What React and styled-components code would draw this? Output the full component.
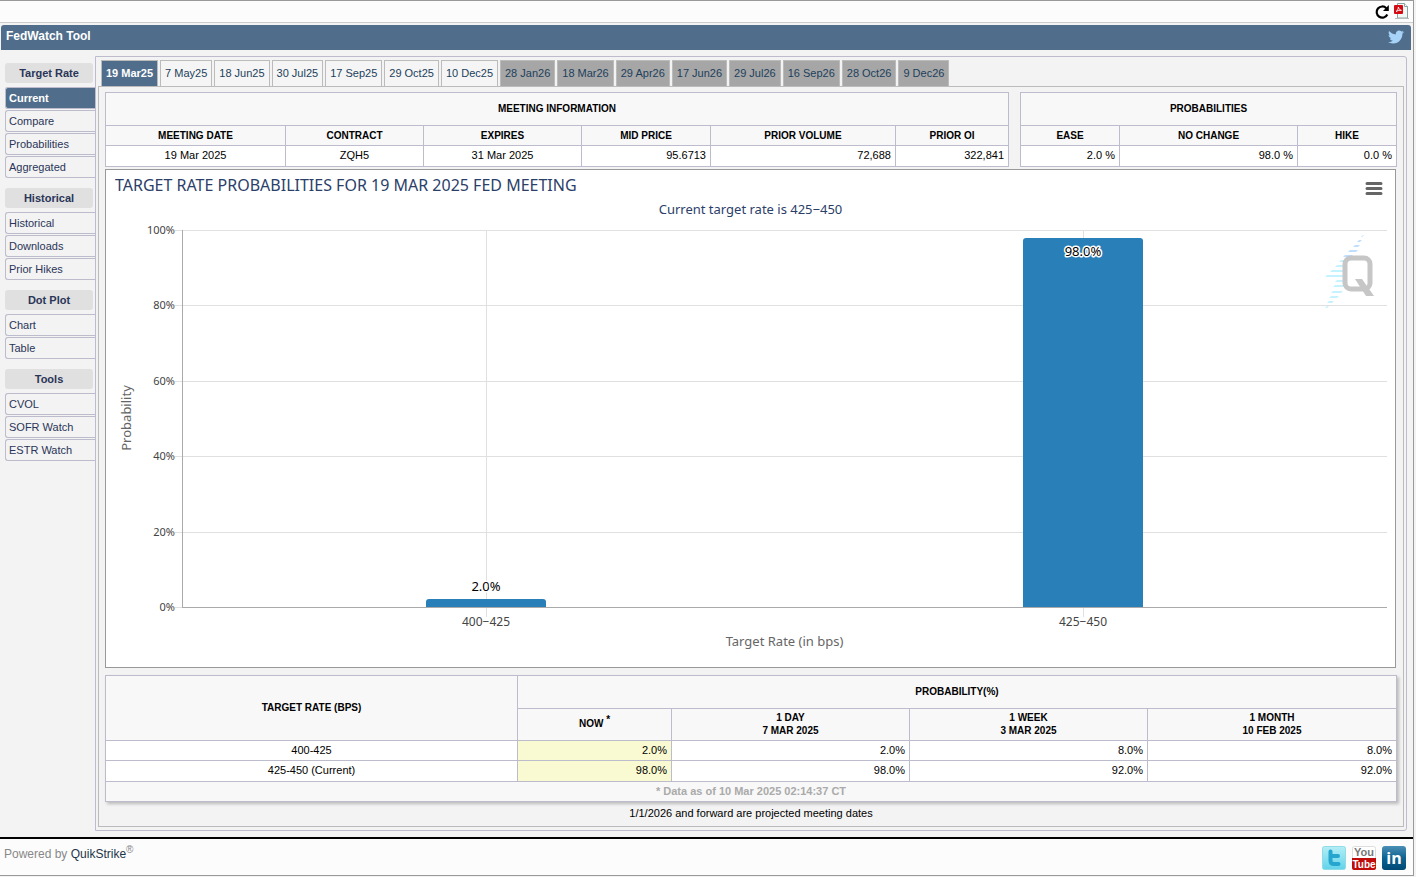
import React, { useLayoutEffect, useRef, useState } from 'react'
import styled, { createGlobalStyle, css } from 'styled-components';
import { FaTwitter } from 'react-icons/fa';

const colors = {
    page: '#f3f3f3',
    bar: '#fcfcfc',
    blue: '#506e8c',
    navy: '#2a3558',
    line: '#bcbccc',
    frame: '#999',
    head: '#f8f8f8',
    series: '#2980b9',
};

const chartFont = `'Noto Sans', 'Open Sans', sans-serif`;

const GlobalStyle = createGlobalStyle`
    * {
        box-sizing: border-box;
    }
    body {
        margin: 0;
        background: ${colors.page};
        font-family: 'Liberation Sans', Arial, sans-serif;
        font-size: 11px;
        color: #000;
    }
    a {
        text-decoration: none;
    }
`;

const Page = styled.div`
    margin-right: 2px;
    border: 1px solid ${colors.frame};
    border-left: 0;
    background: ${colors.page};
`;

const Toolbar = styled.div`
    display: flex;
    justify-content: flex-end;
    align-items: center;
    gap: 4px;
    height: 22px;
    padding-right: 4px;
    background: ${colors.bar};
    border-bottom: 1px solid #ccc;
`;

const IconButton = styled.button`
    display: flex;
    padding: 0;
    border: 0;
    background: none;
    cursor: pointer;
`;

const TitleBar = styled.header`
    display: flex;
    justify-content: space-between;
    height: 25px;
    margin: 2px 2px 0 1px;
    padding: 4px 7px 0 5px;
    border-radius: 3px 3px 0 0;
    background: ${colors.blue};
    color: #fff;
    h1 {
        margin: 0;
        font-size: 12px;
        line-height: 14px;
    }
    a {
        color: #a6d3f7;
        line-height: 0;
    }
`;

const Body = styled.div`
    display: flex;
    align-items: flex-start;
    padding: 6px 6px 6px 5px;
`;

const SideBar = styled.nav`
    flex: 0 0 90px;
    padding-top: 7px;
`;

const SideGroup = styled.div`
    display: flex;
    flex-direction: column;
    gap: 1px;
    margin-bottom: 10px;
    h2 {
        margin: 0 2px 3px 0;
        border-radius: 3px;
        background: #e0e0e0;
        color: ${colors.navy};
        font-size: 11px;
        line-height: 20px;
        text-align: center;
    }
`;

const SideLink = styled.a`
    height: 22px;
    padding-left: 3px;
    border: 1px solid ${colors.line};
    border-right: 0;
    border-radius: 3px 0 0 3px;
    color: ${colors.navy};
    line-height: 20px;
    ${({ $active }) => $active && css`
        background: ${colors.blue};
        color: #fff;
        font-weight: bold;
    `}
`;

const Panel = styled.main`
    flex: 1;
    min-width: 0;
    padding: 3px 2px;
    border: 1px solid ${colors.line};
    border-radius: 0 3px 3px 0;
`;

const Tabs = styled.div`
    display: flex;
    gap: 2px;
    padding-left: 3px;
`;

const Tab = styled.a`
    padding: 0 4px;
    border: 1px solid #bbb;
    border-bottom: 0;
    background: ${({ $projected }) => ($projected ? '#a6a6a6' : '#f5f5f5')};
    color: #1c3f5c;
    line-height: 25px;
    white-space: nowrap;
    ${({ $active }) => $active && css`
        background: ${colors.blue};
        color: #fff;
        font-weight: bold;
    `}
`;

const Content = styled.section`
    padding: 5px 6px 6px;
    border: 1px solid #bbb;
`;

const Summary = styled.div`
    display: grid;
    grid-template-columns: 904fr 377fr;
    gap: 11px;
`;

const Table = styled.table`
    width: 100%;
    table-layout: fixed;
    border-collapse: collapse;
    background: #fff;
    th, td {
        height: 20px;
        padding: 0 4px;
        border: 1px solid ${colors.line};
    }
    th {
        background: ${colors.head};
        font-size: 10px;
        line-height: 13px;
        text-transform: uppercase;
    }
    td {
        padding-bottom: 2px;
        line-height: 12px;
    }
    tbody tr:last-child td {
        height: 21px;
    }
    sup {
        font-size: 10px;
        line-height: 0;
    }
`;

const HeadCell = styled.th`
    && {
        height: ${({ $sub }) => ($sub ? 32 : 33)}px;
        padding-bottom: 2px;
    }
`;

const Cell = styled.td`
    text-align: ${({ $center }) => ($center ? 'center' : 'right')};
    background: ${({ $now }) => ($now ? '#fafad2' : '#fff')};
`;

const NoteCell = styled.td`
    background: ${colors.head};
    color: #aaa;
    font-weight: bold;
    text-align: center;
`;

const HistoryTable = styled(Table)`
    margin-top: 7px;
    box-shadow: 2px 2px 3px #bbb;
`;

const ChartBox = styled.div`
    position: relative;
    height: 499px;
    margin: 2px 1px 0 0;
    border: 1px solid ${colors.frame};
    background: #fff;
    svg {
        display: block;
    }
`;

const ChartSvg = styled.svg`
    font-family: ${chartFont};
    font-size: 11px;
    fill: #444;
    .title {
        font-size: 16px;
        fill: #2b4069;
    }
    .subtitle {
        font-size: 13px;
        fill: #2b4069;
    }
    .axis {
        font-size: 13px;
        fill: #666;
    }
    .value {
        font-size: 13px;
        fill: #000;
        stroke: #fff;
        stroke-width: 3px;
        stroke-linejoin: round;
        paint-order: stroke;
    }
    .category {
        font-size: 12px;
    }
`;

const MenuButton = styled(IconButton)`
    position: absolute;
    top: 11px;
    right: 12px;
`;

const Projected = styled.p`
    margin: 5px 0 1px;
    font-size: 11px;
    line-height: 12px;
    text-align: center;
`;

const Footer = styled.footer`
    display: flex;
    justify-content: space-between;
    height: 38px;
    padding: 7px 7px 0 4px;
    border-top: 2px solid #000;
    background: ${colors.bar};
    color: #888;
    font-size: 12px;
    line-height: 16px;
    a {
        color: #1c3348;
    }
    sup {
        font-size: 10px;
        line-height: 0;
    }
`;

const Social = styled.div`
    display: flex;
    gap: 6px;
    svg {
        display: block;
    }
`;

const menu = [
    { title: 'Target Rate', items: ['Current', 'Compare', 'Probabilities', 'Aggregated'] },
    { title: 'Historical', items: ['Historical', 'Downloads', 'Prior Hikes'] },
    { title: 'Dot Plot', items: ['Chart', 'Table'] },
    { title: 'Tools', items: ['CVOL', 'SOFR Watch', 'ESTR Watch'] },
];

const meetings = [
    '19 Mar25', '7 May25', '18 Jun25', '30 Jul25', '17 Sep25', '29 Oct25', '10 Dec25',
    '28 Jan26', '18 Mar26', '29 Apr26', '17 Jun26', '29 Jul26', '16 Sep26', '28 Oct26', '9 Dec26',
];

const info = [
    { label: 'Meeting Date', value: '19 Mar 2025', width: 180, center: true },
    { label: 'Contract', value: 'ZQH5', width: 138, center: true },
    { label: 'Expires', value: '31 Mar 2025', width: 158, center: true },
    { label: 'Mid Price', value: '95.6713', width: 129 },
    { label: 'Prior Volume', value: '72,688', width: 185 },
    { label: 'Prior OI', value: '322,841', width: 113 },
];

const odds = [
    { label: 'Ease', value: '2.0 %', width: 99 },
    { label: 'No Change', value: '98.0 %', width: 178 },
    { label: 'Hike', value: '0.0 %', width: 99 },
];

const history = [
    { rate: '400-425', values: ['2.0%', '2.0%', '8.0%', '8.0%'] },
    { rate: '425-450 (Current)', values: ['98.0%', '98.0%', '92.0%', '92.0%'] },
];

const bars = [
    { label: '400−425', value: 2 },
    { label: '425−450', value: 98 },
];

const Columns = ({ widths }) => {
    const total = widths.reduce((sum, w) => sum + w, 0);
    return (
        <colgroup>
            {widths.map((w, i) => <col key={i} style={{ width: `${(w / total) * 100}%` }} />)}
        </colgroup>
    )
}

const SummaryTable = ({ title, columns }) => (
    <Table>
        <Columns widths={columns.map(({ width }) => width)} />
        <thead>
            <tr><HeadCell colSpan={columns.length}>{title}</HeadCell></tr>
            <tr>{columns.map(({ label }) => <th key={label}>{label}</th>)}</tr>
        </thead>
        <tbody>
            <tr>{columns.map(({ label, value, center }) => <Cell key={label} $center={center}>{value}</Cell>)}</tr>
        </tbody>
    </Table>
)

// lightning bolt made of thin stripes: left, top, width
const stripes = [
    [36, 0, 1], [32, 5, 3], [28, 10, 5], [23, 15, 8], [18, 20, 8], [14, 25, 8], [10, 30, 10], [5, 35, 14],
    [0, 40, 18], [10, 45, 9], [8, 50, 10], [6, 56, 10], [4, 61, 8], [2, 66, 5], [0, 71, 2],
];

const Watermark = ({ x, y }) => (
    <g transform={`translate(${x} ${y})`}>
        {stripes.map(([left, top, width], i) => (
            <path
                key={top}
                d={`M${left + 2} ${top - 1}h${width}l-2 2h-${width}z`}
                fill={i < 5 ? '#c0dfff' : '#c4f3ff'}
            />
        ))}
        <rect x="20" y="22" width="25" height="31" rx="6" fill="#fff" stroke="#c6c6c6" strokeWidth="5" />
        <path d="M30 43h7l12 17h-8z" fill="#c6c6c6" />
    </g>
)

const Chart = () => {
    const box = useRef(null);
    const [width, setWidth] = useState(1289);

    useLayoutEffect(() => {
        const measure = () => setWidth(box.current.clientWidth);
        measure();
        window.addEventListener('resize', measure);
        return () => window.removeEventListener('resize', measure);
    }, []);

    const left = 76;
    const right = width - 8;
    const top = 60;
    const bottom = 437;
    const slot = (right - left - 12) / bars.length;
    const barWidth = Math.round(slot / 10) * 2;
    const yOf = value => Math.round(bottom - ((bottom - top) * value) / 100);
    const xOf = i => Math.round(left + 6 + slot * (i + 0.5));

    return (
        <ChartBox ref={box}>
            <ChartSvg width={width} height="497">
                <text className="title" x="9" y="21">TARGET RATE PROBABILITIES FOR 19 MAR 2025 FED MEETING</text>
                <text className="subtitle" x={width / 2} y="44" textAnchor="middle">Current target rate is 425−450</text>
                <g shapeRendering="crispEdges" fill="#e0e0e0">
                    {[20, 40, 60, 80, 100].map(v => (
                        <rect key={v} x={left - 7} y={yOf(v)} width={right - left + 7} height="1" />
                    ))}
                    <rect x={left - 7} y={bottom} width="7" height="1" />
                    {bars.map(({ label }, i) => (
                        <rect key={label} x={xOf(i)} y={top} width="1" height={bottom - top + 10} />
                    ))}
                </g>
                {[0, 20, 40, 60, 80, 100].map(v => (
                    <text key={v} x={left - 7} y={yOf(v) + 4} textAnchor="end">{v}%</text>
                ))}
                <text className="axis" textAnchor="middle" transform="translate(25 248) rotate(-90)">Probability</text>
                <Watermark x={width - 70} y={66} />
                {bars.map(({ label, value }, i) => (
                    <path
                        key={label}
                        d={`M${xOf(i) - barWidth / 2} ${bottom}V${yOf(value) + 3}q0 -3 3 -3h${barWidth - 6}q3 0 3 3V${bottom}z`}
                        fill={colors.series}
                    />
                ))}
                <g shapeRendering="crispEdges" fill="#aaa">
                    <rect x={left} y={top} width="1" height={bottom - top} />
                    <rect x={left} y={bottom} width={right - left} height="1" />
                </g>
                {bars.map(({ label, value }, i) => (
                    <g key={label} textAnchor="middle">
                        <text className="value" x={xOf(i)} y={value > 90 ? yOf(value) + 18 : yOf(value) - 8}>{value.toFixed(1)}%</text>
                        <text className="category" x={xOf(i)} y={bottom + 19}>{label}</text>
                    </g>
                ))}
                <text className="axis" x={(left + right) / 2} y="476" textAnchor="middle">Target Rate (in bps)</text>
            </ChartSvg>
            <MenuButton aria-label="Chart menu">
                <svg width="18" height="15" stroke="#666" strokeWidth="3" strokeLinecap="round">
                    <path d="M2 2.500h14M2 7.500h14M2 12.500h14" />
                </svg>
            </MenuButton>
        </ChartBox>
    )
}

const RefreshIcon = () => (
    <svg width="16" height="16" viewBox="0 0 16 16">
        <path d="M12.300 4.200A5.600 5.600 0 1 0 13.300 10.500" fill="none" stroke="#000" strokeWidth="2.200" />
        <path d="M14.800 1v6H9z" fill="#000" />
    </svg>
)

const PdfIcon = () => (
    <svg width="15" height="17" viewBox="0 0 15 17">
        <path d="M3.500 .5h7l3 3v11.500h-10z" fill="#f3f8f7" stroke="#8ba39f" />
        <path d="M10.500 .5v3h3" fill="#fff" stroke="#8ba39f" />
        <path d="M1 15.500h14" stroke="#b5bebc" />
        <rect x="0" y="2" width="9" height="9" rx="1" fill="#d40b12" />
        <path d="M2 8.700c1.200-.7 2.300-2.700 2.400-4.700.3 1.800 1.300 3 3 3.300-1.800-.2-3.800.3-5.400 1.400z" fill="none" stroke="#fff" strokeWidth=".9" />
    </svg>
)

const TwitterBadge = () => (
    <svg width="24" height="24" viewBox="0 0 24 24">
        <defs>
            <linearGradient id="tw" x1="0" y1="0" x2="0" y2="1">
                <stop offset="0" stopColor="#b4eef5" />
                <stop offset="1" stopColor="#62d3ea" />
            </linearGradient>
        </defs>
        <rect x=".5" y=".5" width="23" height="23" rx="2" fill="url(#tw)" stroke="#8fdbe8" />
        <path d="M8.500 5.500v9q0 3.500 3.500 3.500h4.500M8.500 10h7.500" fill="none" stroke="#26a5cf" strokeWidth="4" strokeLinecap="round" />
    </svg>
)

const YouTubeBadge = () => (
    <svg width="24" height="24" viewBox="0 0 24 24" fontFamily="'Liberation Sans Narrow', 'Liberation Sans', sans-serif" fontWeight="bold" textAnchor="middle">
        <rect x=".5" y=".5" width="23" height="23" rx="2" fill="#fff" stroke="#ddd" />
        <path d="M0 12h24v10q0 2-2 2h-20q-2 0-2-2z" fill="#c00b0b" />
        <text x="12" y="10" fontSize="11" fill="#777">You</text>
        <text x="12" y="22" fontSize="10" fill="#fff">Tube</text>
    </svg>
)

const LinkedInBadge = () => (
    <svg width="24" height="24" viewBox="0 0 24 24">
        <defs>
            <linearGradient id="li" x1="0" y1="0" x2="0" y2="1">
                <stop offset="0" stopColor="#4a8fb5" />
                <stop offset=".5" stopColor="#0d6291" />
                <stop offset="1" stopColor="#004a75" />
            </linearGradient>
        </defs>
        <rect width="24" height="24" rx="3" fill="url(#li)" />
        <text x="12" y="18" fontFamily="'Open Sans', sans-serif" fontWeight="bold" fontSize="16" fill="#fff" textAnchor="middle">in</text>
    </svg>
)

const App = () => (
    <>
        <GlobalStyle />
        <Page>
            <Toolbar>
                <IconButton aria-label="Refresh"><RefreshIcon /></IconButton>
                <IconButton aria-label="Export to PDF"><PdfIcon /></IconButton>
            </Toolbar>
            <TitleBar>
                <h1>FedWatch Tool</h1>
                <a href="#twitter" aria-label="Twitter"><FaTwitter size={16} /></a>
            </TitleBar>
            <Body>
                <SideBar>
                    {menu.map(({ title, items }) => (
                        <SideGroup key={title}>
                            <h2>{title}</h2>
                            {items.map(item => (
                                <SideLink key={item} href="#view" $active={item === 'Current'}>{item}</SideLink>
                            ))}
                        </SideGroup>
                    ))}
                </SideBar>
                <Panel>
                    <Tabs>
                        {meetings.map((meeting, i) => (
                            <Tab key={meeting} href="#meeting" $active={i === 0} $projected={meeting.endsWith('26')}>{meeting}</Tab>
                        ))}
                    </Tabs>
                    <Content>
                        <Summary>
                            <SummaryTable title="Meeting Information" columns={info} />
                            <SummaryTable title="Probabilities" columns={odds} />
                        </Summary>
                        <Chart />
                        <HistoryTable>
                            <Columns widths={[412, 154, 238, 238, 249]} />
                            <thead>
                                <tr>
                                    <HeadCell rowSpan="2">Target Rate (bps)</HeadCell>
                                    <HeadCell colSpan="4">Probability(%)</HeadCell>
                                </tr>
                                <tr>
                                    <HeadCell $sub>Now <sup>*</sup></HeadCell>
                                    <HeadCell $sub>1 Day<br />7 Mar 2025</HeadCell>
                                    <HeadCell $sub>1 Week<br />3 Mar 2025</HeadCell>
                                    <HeadCell $sub>1 Month<br />10 Feb 2025</HeadCell>
                                </tr>
                            </thead>
                            <tbody>
                                {history.map(({ rate, values }) => (
                                    <tr key={rate}>
                                        <Cell $center>{rate}</Cell>
                                        {values.map((value, i) => <Cell key={i} $now={i === 0}>{value}</Cell>)}
                                    </tr>
                                ))}
                            </tbody>
                            <tfoot>
                                <tr><NoteCell colSpan="5">* Data as of 10 Mar 2025 02:14:37 CT</NoteCell></tr>
                            </tfoot>
                        </HistoryTable>
                        <Projected>1/1/2026 and forward are projected meeting dates</Projected>
                    </Content>
                </Panel>
            </Body>
            <Footer>
                <div>Powered by <a href="#quikstrike">QuikStrike</a><sup>®</sup></div>
                <Social>
                    <a href="#twitter" aria-label="Twitter"><TwitterBadge /></a>
                    <a href="#youtube" aria-label="YouTube"><YouTubeBadge /></a>
                    <a href="#linkedin" aria-label="LinkedIn"><LinkedInBadge /></a>
                </Social>
            </Footer>
        </Page>
    </>
)

export default App
